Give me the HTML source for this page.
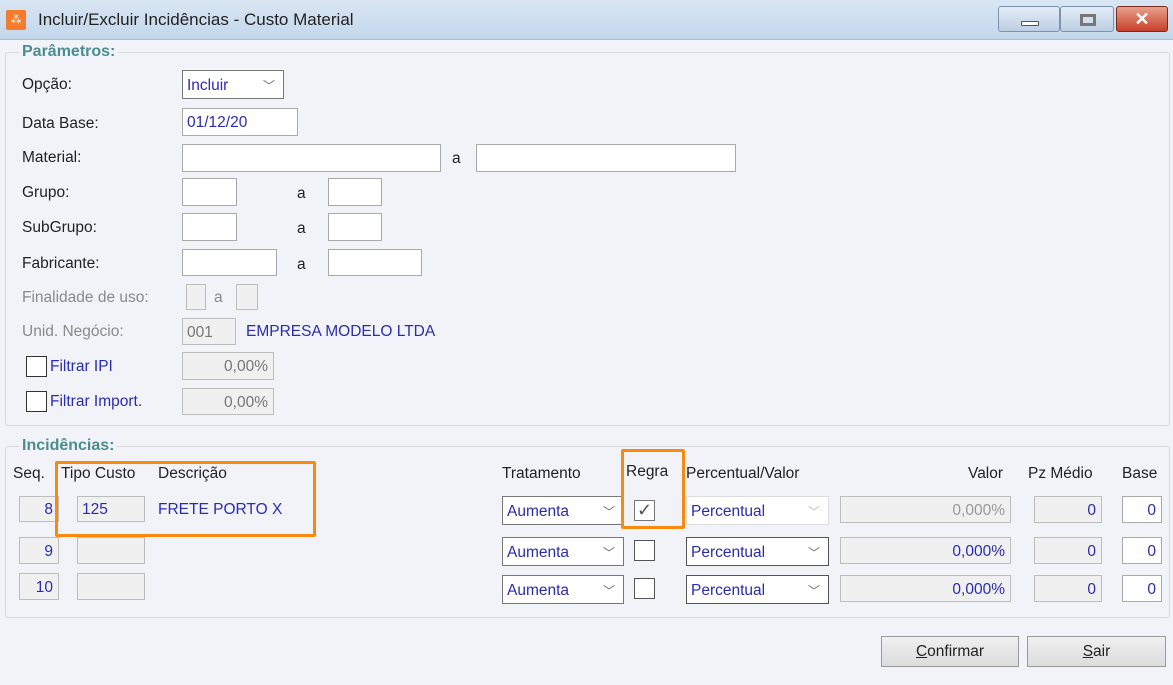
<!DOCTYPE html><html><head><meta charset="utf-8"><style>
*{box-sizing:border-box;margin:0;padding:0}
body{width:1173px;height:685px;background:#f2f3f9;font-family:"Liberation Sans",sans-serif;font-size:15.5px;color:#222;position:relative;overflow:hidden}
.a{position:absolute;white-space:nowrap}
.t{position:absolute;white-space:nowrap;line-height:18px}
.in{position:absolute;background:#fff;border:1px solid #a9a9a9;color:#2b2bb0;padding-left:4px;white-space:nowrap;display:flex;align-items:center;padding-top:2px}
.dis{background:#f0f0f0;border-color:#bdbdbd;color:#777}
.r{justify-content:flex-end;padding-right:5px}
.blue{color:#2b2bb0}
.gray{color:#8a8a8a}
.grp{position:absolute;border:1px solid #d8d8d8;border-radius:3px}
.gl{position:absolute;background:#f2f3f9;color:#4b8d8e;font-weight:bold;font-size:16px;padding:0 3px}
.cb{position:absolute;width:21px;height:21px;border:1px solid #333;background:#fff}
.ch{position:absolute;right:8px;top:6px;color:#666;font-size:12px}
.or{position:absolute;border:3px solid #f98a10;border-radius:2px}
.btn{position:absolute;border:1px solid #9a9a9a;background:linear-gradient(#f0f0f0,#dcdcdc);text-align:center;line-height:30px}
</style></head><body>
<div class="a" style="left:0;top:0;width:1173px;height:40px;background:linear-gradient(#d9e6f3,#c3d7ec);border-bottom:1px solid #a8bcd4"></div>
<div class="a" style="left:6px;top:10px;width:20px;height:20px;background:#f57b2c;border-radius:2px;color:#fff;font-size:11px;text-align:center;line-height:20px">⁂</div>
<div class="t" style="left:38px;top:11px;font-size:17px;color:#222">Incluir/Excluir Incidências - Custo Material</div>
<div class="a" style="left:998px;top:6px;width:62px;height:26px;border:1px solid #7d93ad;border-radius:3px;background:linear-gradient(#e4edf7,#bccfe4)"><div class="a" style="left:22px;top:14px;width:18px;height:5px;background:#fff;border:1px solid #555;border-radius:1px"></div></div>
<div class="a" style="left:1060px;top:6px;width:54px;height:26px;border:1px solid #7d93ad;border-radius:3px;background:linear-gradient(#e4edf7,#bccfe4)"><div class="a" style="left:19px;top:7px;width:16px;height:12px;border:3px solid #777;background:#cfe0f0"></div></div>
<div class="a" style="left:1116px;top:6px;width:52px;height:26px;border:1px solid #7a2a1a;border-radius:3px;background:linear-gradient(#e9a08c,#c8402a);color:#fff;font-weight:bold;font-size:18px;text-align:center;line-height:24px">✕</div>

<div class="grp" style="left:5px;top:52px;width:1165px;height:374px"></div>
<div class="gl" style="left:19px;top:43px">Parâmetros:</div>
<div class="t" style="left:22px;top:76px">Opção:</div>
<div class="in" style="left:182px;top:70px;width:102px;height:29px;border-color:#777">Incluir<span class="ch">﹀</span></div>
<div class="t" style="left:22px;top:115px">Data Base:</div>
<div class="in" style="left:182px;top:108px;width:116px;height:28px">01/12/20</div>
<div class="t" style="left:22px;top:149px">Material:</div>
<div class="in" style="left:182px;top:144px;width:259px;height:28px"></div>
<div class="t" style="left:452px;top:150px">a</div>
<div class="in" style="left:476px;top:144px;width:260px;height:28px"></div>
<div class="t" style="left:22px;top:184px">Grupo:</div>
<div class="in" style="left:182px;top:178px;width:55px;height:28px"></div>
<div class="t" style="left:297px;top:185px">a</div>
<div class="in" style="left:328px;top:178px;width:54px;height:28px"></div>
<div class="t" style="left:22px;top:219px">SubGrupo:</div>
<div class="in" style="left:182px;top:213px;width:55px;height:28px"></div>
<div class="t" style="left:297px;top:220px">a</div>
<div class="in" style="left:328px;top:213px;width:54px;height:28px"></div>
<div class="t" style="left:22px;top:255px">Fabricante:</div>
<div class="in" style="left:182px;top:249px;width:95px;height:27px"></div>
<div class="t" style="left:297px;top:256px">a</div>
<div class="in" style="left:328px;top:249px;width:94px;height:27px"></div>
<div class="t gray" style="left:22px;top:289px">Finalidade de uso:</div>
<div class="in dis" style="left:186px;top:284px;width:20px;height:26px"></div>
<div class="t gray" style="left:214px;top:289px">a</div>
<div class="in dis" style="left:236px;top:284px;width:22px;height:26px"></div>
<div class="t gray" style="left:22px;top:323px">Unid. Negócio:</div>
<div class="in dis" style="left:182px;top:318px;width:54px;height:27px">001</div>
<div class="t blue" style="left:246px;top:323px">EMPRESA MODELO LTDA</div>
<div class="cb" style="left:26px;top:356px"></div>
<div class="t blue" style="left:50px;top:358px">Filtrar IPI</div>
<div class="in dis r" style="left:182px;top:352px;width:92px;height:28px">0,00%</div>
<div class="cb" style="left:26px;top:391px"></div>
<div class="t blue" style="left:50px;top:393px">Filtrar Import.</div>
<div class="in dis r" style="left:182px;top:388px;width:92px;height:27px">0,00%</div>

<div class="grp" style="left:5px;top:446px;width:1165px;height:172px"></div>
<div class="gl" style="left:19px;top:437px">Incidências:</div>
<div class="t" style="left:13px;top:465px">Seq.</div>
<div class="t" style="left:61px;top:465px">Tipo Custo</div>
<div class="t" style="left:158px;top:465px">Descrição</div>
<div class="t" style="left:502px;top:465px">Tratamento</div>
<div class="t" style="left:626px;top:463px">Regra</div>
<div class="t" style="left:686px;top:465px">Percentual/Valor</div>
<div class="t" style="left:968px;top:465px">Valor</div>
<div class="t" style="left:1028px;top:465px">Pz Médio</div>
<div class="t" style="left:1122px;top:465px">Base</div>

<div class="in dis r" style="left:19px;top:496px;width:40px;height:26px;color:#2b2bb0">8</div>
<div class="in dis" style="left:77px;top:496px;width:68px;height:26px;color:#2b2bb0">125</div>
<div class="t blue" style="left:158px;top:501px">FRETE PORTO X</div>
<div class="in dis r" style="left:19px;top:537px;width:40px;height:27px;color:#2b2bb0">9</div>
<div class="in dis" style="left:77px;top:537px;width:68px;height:27px"></div>
<div class="in dis r" style="left:19px;top:573px;width:40px;height:27px;color:#2b2bb0">10</div>
<div class="in dis" style="left:77px;top:573px;width:68px;height:27px"></div>

<div class="in" style="left:502px;top:496px;width:122px;height:29px;border-color:#777">Aumenta<span class="ch">﹀</span></div>
<div class="in" style="left:502px;top:537px;width:122px;height:29px;border-color:#777">Aumenta<span class="ch">﹀</span></div>
<div class="in" style="left:502px;top:575px;width:122px;height:29px;border-color:#777">Aumenta<span class="ch">﹀</span></div>
<div class="cb" style="left:634px;top:500px;border-color:#777;color:#555;font-size:18px;line-height:18px;text-align:center">✓</div>
<div class="cb" style="left:634px;top:540px;border-color:#555"></div>
<div class="cb" style="left:634px;top:578px;border-color:#555"></div>
<div class="in" style="left:686px;top:496px;width:143px;height:29px;border-color:#ddd">Percentual<span class="ch" style="color:#bbb">﹀</span></div>
<div class="in" style="left:686px;top:537px;width:143px;height:29px;border-color:#555">Percentual<span class="ch">﹀</span></div>
<div class="in" style="left:686px;top:575px;width:143px;height:29px;border-color:#555">Percentual<span class="ch">﹀</span></div>
<div class="in dis r" style="left:840px;top:496px;width:171px;height:27px;color:#999">0,000%</div>
<div class="in dis r" style="left:840px;top:537px;width:171px;height:27px;color:#2b2bb0">0,000%</div>
<div class="in dis r" style="left:840px;top:575px;width:171px;height:27px;color:#2b2bb0">0,000%</div>
<div class="in dis r" style="left:1034px;top:496px;width:68px;height:27px;color:#2b2bb0">0</div>
<div class="in dis r" style="left:1034px;top:537px;width:68px;height:27px;color:#2b2bb0">0</div>
<div class="in dis r" style="left:1034px;top:575px;width:68px;height:27px;color:#2b2bb0">0</div>
<div class="in r" style="left:1122px;top:496px;width:40px;height:27px">0</div>
<div class="in r" style="left:1122px;top:537px;width:40px;height:27px">0</div>
<div class="in r" style="left:1122px;top:575px;width:40px;height:27px">0</div>

<div class="or" style="left:55px;top:461px;width:261px;height:76px"></div>
<div class="or" style="left:621px;top:449px;width:64px;height:80px"></div>

<div class="btn" style="left:881px;top:636px;width:138px;height:31px"><u>C</u>onfirmar</div>
<div class="btn" style="left:1027px;top:636px;width:139px;height:31px"><u>S</u>air</div>
</body></html>
